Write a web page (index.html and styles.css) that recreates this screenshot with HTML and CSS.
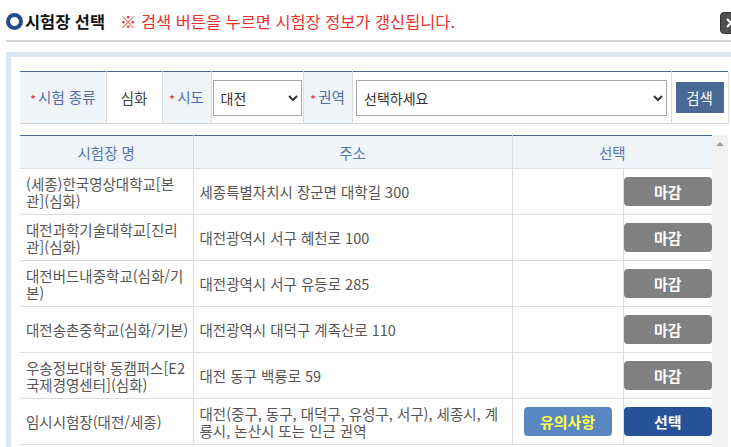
FILE: index.html
```html
<!DOCTYPE html>
<html lang="ko">
<head>
    <meta charset="UTF-8">
    <meta name="viewport" content="width=device-width, initial-scale=1.0">
    <title>시험장 선택</title>
    <link rel="stylesheet" href="styles.css">
</head>
<body>
    <div class="page">
        <header class="title-bar">
            <span class="title-icon"></span>
            <h2 class="title">시험장 선택</h2>
            <p class="notice">※ 검색 버튼을 누르면 시험장 정보가 갱신됩니다.</p>
            <button class="close-btn" type="button" aria-label="닫기">
                <svg width="12" height="12" viewBox="0 0 12 12">
                    <path d="M2 2 L10 10 M10 2 L2 10" stroke="#fff" stroke-width="2" fill="none"/>
                </svg>
            </button>
        </header>

        <div class="box">
            <!-- 검색 조건 -->
            <table class="search-table">
                <colgroup>
                    <col style="width:86px"><col style="width:56px"><col style="width:49px">
                    <col style="width:92px"><col style="width:49px"><col style="width:319px">
                    <col style="width:57px">
                </colgroup>
                <tr>
                    <td class="label"><span class="star">*</span>시험 종류</td>
                    <td class="value">심화</td>
                    <td class="label"><span class="star">*</span>시도</td>
                    <td>
                        <select class="field-select sido">
                            <option>대전</option>
                            <option>세종</option>
                            <option>충남</option>
                        </select>
                    </td>
                    <td class="label"><span class="star">*</span>권역</td>
                    <td>
                        <select class="field-select area">
                            <option>선택하세요</option>
                        </select>
                    </td>
                    <td><button class="search-btn" type="button">검색</button></td>
                </tr>
            </table>

            <!-- 시험장 목록 -->
            <div class="list-area">
                <div class="list-scroll">
                    <table class="list-table">
                        <colgroup>
                            <col style="width:173px"><col style="width:319px">
                            <col style="width:111px"><col style="width:89px">
                        </colgroup>
                        <thead>
                            <tr>
                                <th>시험장 명</th>
                                <th>주소</th>
                                <th colspan="2">선택</th>
                            </tr>
                        </thead>
                        <tbody>
                            <tr>
                                <td class="name">(세종)한국영상대학교[본관](심화)</td>
                                <td>세종특별자치시 장군면 대학길 300</td>
                                <td class="btn-cell"></td>
                                <td class="btn-cell"><button class="btn btn-closed" type="button">마감</button></td>
                            </tr>
                            <tr>
                                <td class="name">대전과학기술대학교[진리관](심화)</td>
                                <td>대전광역시 서구 혜천로 100</td>
                                <td class="btn-cell"></td>
                                <td class="btn-cell"><button class="btn btn-closed" type="button">마감</button></td>
                            </tr>
                            <tr>
                                <td class="name">대전버드내중학교(심화/기본)</td>
                                <td>대전광역시 서구 유등로 285</td>
                                <td class="btn-cell"></td>
                                <td class="btn-cell"><button class="btn btn-closed" type="button">마감</button></td>
                            </tr>
                            <tr>
                                <td class="name">대전송촌중학교(심화/기본)</td>
                                <td>대전광역시 대덕구 계족산로 110</td>
                                <td class="btn-cell"></td>
                                <td class="btn-cell"><button class="btn btn-closed" type="button">마감</button></td>
                            </tr>
                            <tr>
                                <td class="name">우송정보대학 동캠퍼스[E2 국제경영센터](심화)</td>
                                <td>대전 동구 백룡로 59</td>
                                <td class="btn-cell"></td>
                                <td class="btn-cell"><button class="btn btn-closed" type="button">마감</button></td>
                            </tr>
                            <tr>
                                <td class="name">임시시험장(대전/세종)</td>
                                <td>대전(중구, 동구, 대덕구, 유성구, 서구), 세종시, 계룡시, 논산시 또는 인근 권역</td>
                                <td class="btn-cell"><button class="btn btn-notice" type="button">유의사항</button></td>
                                <td class="btn-cell"><button class="btn btn-select" type="button">선택</button></td>
                            </tr>
                        </tbody>
                    </table>
                </div>
                <div class="scroll-track"><span class="scroll-up"></span></div>
            </div>
        </div>
    </div>
</body>
</html>
```

FILE: styles.css
```css
/* ===== BASE ===== */
* {
    margin: 0;
    padding: 0;
    box-sizing: border-box;
}

html, body {
    overflow: hidden;
}

body {
    font-family: "Noto Sans CJK KR", "Noto Sans", sans-serif;
    font-size: 14.5px;
    color: #555;
    background: #fff;
}

.page {
    width: 736px;
    margin-left: 6px;
}

/* ===== TITLE BAR ===== */
.title-bar {
    display: flex;
    align-items: center;
    height: 42px;
    padding-top: 2px;
    border-bottom: 2px solid #d6d6d6;
}

.title-icon {
    width: 17px;
    height: 17px;
    border: 4px solid #244d8c;
    border-radius: 50%;
}

.title {
    margin-left: 2px;
    font-size: 16.4px;
    font-weight: 700;
    line-height: 20px;
    color: #111;
}

.notice {
    margin-left: 15px;
    font-size: 16.4px;
    line-height: 20px;
    color: #e8322e;
}

.close-btn {
    display: flex;
    align-items: center;
    justify-content: center;
    width: 22px;
    height: 22px;
    margin-left: auto;
    margin-top: 4px;
    background: #505050;
    border: 1px solid #333;
    border-radius: 4px;
}

/* ===== SEARCH BOX ===== */
.box {
    margin-top: 10px;
    padding: 14px 9px 0;
    border: 5px solid #dde7f1;
}

.search-table {
    width: 708px;
    table-layout: fixed;
    border-collapse: collapse;
    border-top: 1px solid #4a6894;
    border-bottom: 1px solid #d8d8d8;
}

.search-table td {
    height: 52px;
    padding: 0;
    text-align: center;
    border-left: 1px solid #ddd;
    color: #444;
}

.search-table td:first-child {
    border-left: none;
}

.search-table td:last-child {
    border-right: 1px solid #ddd;
}

.search-table .label {
    background: #eff4f9;
    color: #4e6ea5;
}

.star {
    margin-right: 2px;
    font-size: 13px;
    color: #e04040;
    vertical-align: -2px;
}

.field-select {
    height: 36px;
    padding: 0 3px;
    border: 1px solid #a9a9a9;
    border-radius: 0;
    background: #fff;
    font-family: inherit;
    font-size: 14px;
    color: #333;
}

.sido {
    width: 89px;
}

.area {
    width: 311px;
}

.search-btn {
    width: 48px;
    height: 31px;
    border: none;
    background: #4a6894;
    color: #fff;
    font-family: inherit;
    font-size: 14.5px;
}

/* ===== LIST ===== */
.list-area {
    display: flex;
    height: 320px;
    margin-top: 11px;
}

.list-scroll {
    width: 692px;
    overflow: hidden;
}

.scroll-track {
    display: flex;
    justify-content: center;
    width: 16px;
    padding-top: 7px;
    background: #f1f1f1;
}

.scroll-up {
    width: 0;
    height: 0;
    border-left: 4px solid transparent;
    border-right: 4px solid transparent;
    border-bottom: 4px solid #a3a3a3;
}

.list-table {
    width: 692px;
    table-layout: fixed;
    border-collapse: collapse;
    border-top: 1px solid #4a6894;
}

.list-table th {
    height: 33px;
    font-weight: normal;
    background: #eff4f9;
    color: #5575ad;
    border-left: 1px solid #ddd;
    border-bottom: 1px solid #ddd;
}

.list-table td {
    height: 46px;
    padding: 0 6px;
    line-height: 17px;
    border-left: 1px solid #ddd;
    border-bottom: 1px solid #ddd;
}

.list-table td.name {
    padding-right: 4px;
}

.list-table th:first-child,
.list-table td:first-child {
    border-left: none;
}

.list-table .btn-cell {
    padding: 0;
    text-align: center;
}

.btn {
    width: 88px;
    height: 29px;
    border: none;
    border-radius: 4px;
    font-family: inherit;
    font-size: 15px;
    font-weight: 700;
    color: #fff;
}

.btn-closed {
    background: #808080;
}

.btn-notice {
    background: #5a86c2;
    color: #ffff4f;
}

.btn-select {
    background: #27529a;
}
```
